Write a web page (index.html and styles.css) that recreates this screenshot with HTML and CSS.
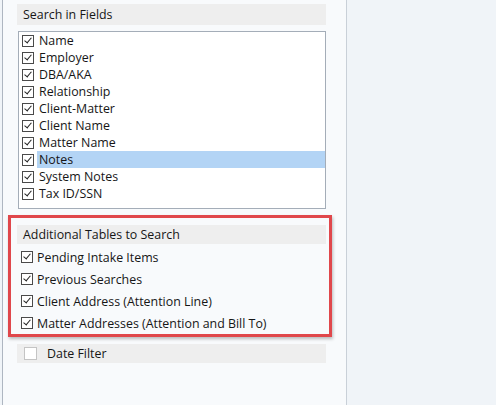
FILE: index.html
```html
<!DOCTYPE html>
<html>
<head>
<meta charset="utf-8">
<link rel="stylesheet" href="styles.css">
</head>
<body>
<div class="layout">
  <div class="panel">
    <div class="group-header">Search in Fields</div>
    <div class="listbox">
      <div class="row"><span class="cb on"></span><span class="label">Name</span></div>
      <div class="row"><span class="cb on"></span><span class="label">Employer</span></div>
      <div class="row"><span class="cb on"></span><span class="label">DBA/AKA</span></div>
      <div class="row"><span class="cb on"></span><span class="label">Relationship</span></div>
      <div class="row"><span class="cb on"></span><span class="label">Client-Matter</span></div>
      <div class="row"><span class="cb on"></span><span class="label">Client Name</span></div>
      <div class="row"><span class="cb on"></span><span class="label">Matter Name</span></div>
      <div class="row selected"><span class="cb on"></span><span class="label">Notes</span></div>
      <div class="row"><span class="cb on"></span><span class="label">System Notes</span></div>
      <div class="row"><span class="cb on"></span><span class="label">Tax ID/SSN</span></div>
    </div>
    <div class="highlight-box">
      <div class="group-header small">Additional Tables to Search</div>
      <div class="opt"><span class="cb on"></span><span>Pending Intake Items</span></div>
      <div class="opt"><span class="cb on"></span><span>Previous Searches</span></div>
      <div class="opt"><span class="cb on"></span><span>Client Address (Attention Line)</span></div>
      <div class="opt"><span class="cb on"></span><span>Matter Addresses (Attention and Bill To)</span></div>
    </div>
    <div class="date-filter"><span class="cb off"></span><span>Date Filter</span></div>
  </div>
  <div class="rest"></div>
</div>
</body>
</html>
```
FILE: styles.css
```css
html, body {
  margin: 0;
  padding: 0;
}
body {
  background: #f0f4f8;
  font-family: "Open Sans", "Noto Sans", sans-serif;
  font-size: 12.4px;
  color: #161616;
  width: 496px;
  height: 405px;
  overflow: hidden;
}
.layout {
  display: flex;
  height: 405px;
}
.panel {
  margin-left: 2px;
  width: 309px;
  padding: 4px 20px 0 14px;
  border-left: 1px solid #aeb6c1;
  border-right: 1px solid #c9d0d8;
  background: #f8fafc;
}
.rest {
  flex: 1;
  background: #f0f4f8;
}
.group-header {
  height: 21px;
  line-height: 21px;
  background: #eeeeee;
  padding-left: 6px;
}
.group-header.small {
  height: 19px;
  line-height: 19px;
}
.listbox {
  margin-top: 6px;
  margin-left: 1px;
  background: #fff;
  border: 1px solid #a4adb8;
  padding: 0 0 6px 0;
}
.row {
  display: flex;
  align-items: center;
  height: 17px;
  padding-left: 3px;
}
.row .label {
  flex: 1;
  margin-left: 3px;
  padding-left: 2px;
  line-height: 17px;
}
.row.selected .label {
  background: #b3d4f5;
}
.cb {
  box-sizing: border-box;
  width: 12px;
  height: 12px;
  flex: none;
  background: #fff;
  border: 1px solid #4a4a4a;
  position: relative;
}
.cb.on::after {
  content: "";
  position: absolute;
  left: 3px;
  top: 0px;
  width: 3px;
  height: 6px;
  border-right: 1.3px solid #222;
  border-bottom: 1.3px solid #222;
  transform: rotate(40deg);
}
.cb.off {
  width: 13px;
  height: 13px;
  border-color: #c4c4c4;
}
.highlight-box {
  margin: 6px -6px 0 -9px;
  border: 3px solid #e0474b;
  padding: 7px 3px 0 6px;
  box-shadow: 1px 2px 3px rgba(0, 0, 0, 0.25);
}
.opt {
  display: flex;
  align-items: center;
  height: 22px;
  padding-left: 4px;
  gap: 4px;
}
.highlight-box .group-header + .opt {
  margin-top: 2px;
}
.date-filter {
  margin-top: 7px;
  height: 19px;
  display: flex;
  align-items: center;
  background: #eeeeee;
  padding-left: 7px;
  gap: 10px;
}
```
